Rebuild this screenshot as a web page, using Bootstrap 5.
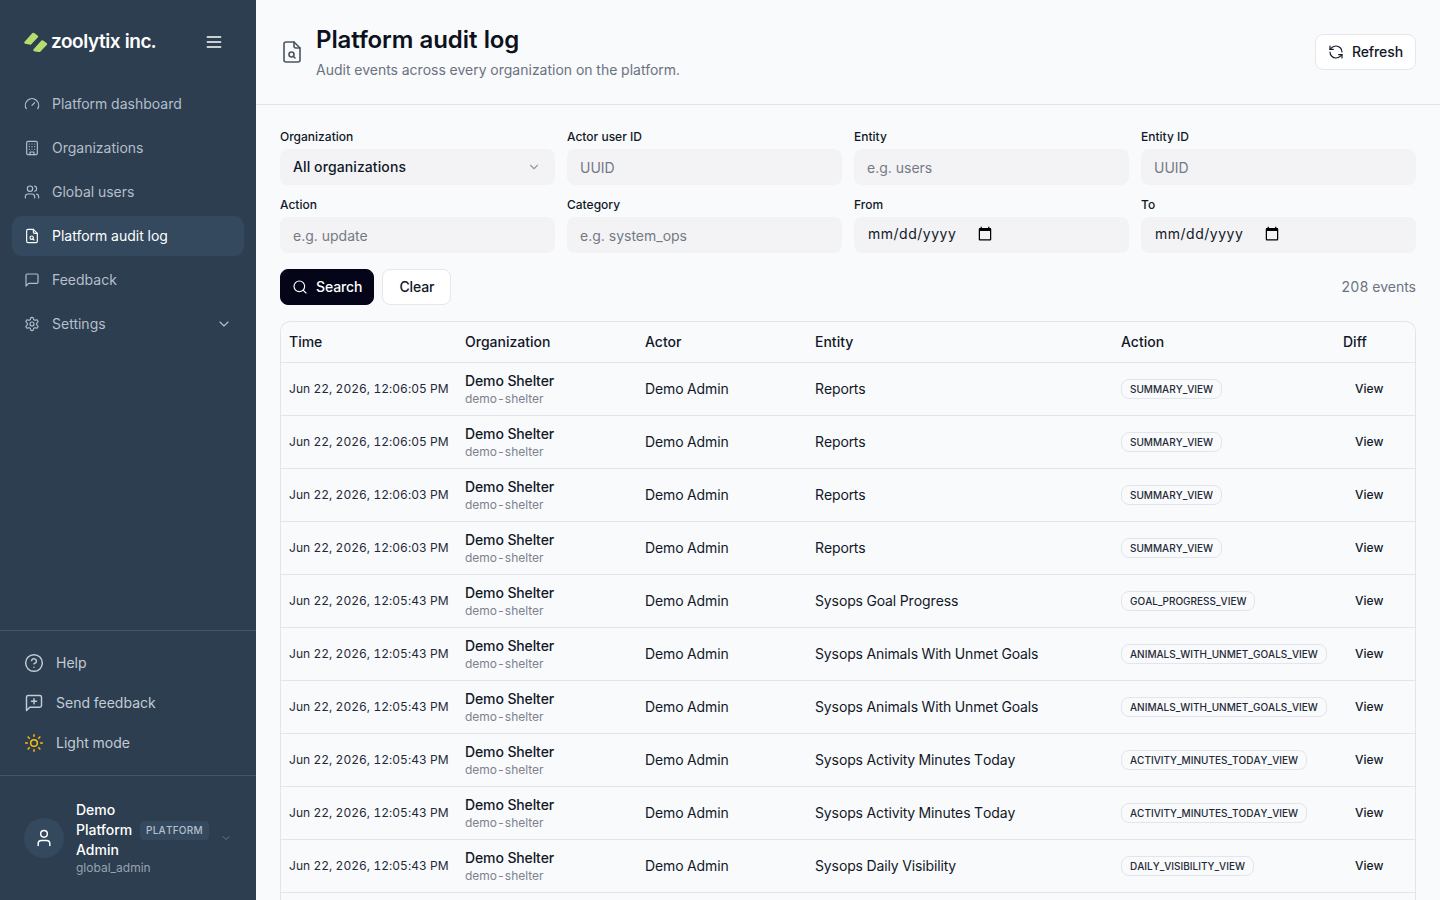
<!doctype html>
<html lang="en">
<head>
  <meta charset="utf-8">
  <meta name="viewport" content="width=device-width, initial-scale=1">
  <title>Platform audit log</title>
  <link href="https://cdn.jsdelivr.net/npm/bootstrap@5.3.5/dist/css/bootstrap.min.css" rel="stylesheet">
  <style>
    html, body { height: 100%; overflow: hidden; }
    body { font-family: Inter, "Liberation Sans", sans-serif; font-size: 14px; background: #f9fafc; color: #111827; font-variant-numeric: tabular-nums; }
    .ico { width: 16px; height: 16px; fill: none; stroke: currentColor; stroke-width: 1.75; stroke-linecap: round; stroke-linejoin: round; flex: none; }
    .ico-lg { width: 20px; height: 20px; }
    .ico-head { width: 24px; height: 24px; stroke-width: 1.6; color: #4b5563; margin-right: 12px; }
    .ico-sm { width: 12px; height: 12px; color: #6f7f90; }

    .side { width: 256px; height: 100vh; background: #2d3e50; color: #b4bfcb; flex: none; }
    .side-brand { height: 84px; padding: 0 24px; }
    .brand-name { font-size: 19px; font-weight: 600; color: #fff; letter-spacing: -.45px; margin-left: 3px; }
    .brand-burger { color: #fff; width: 20px; height: 20px; margin-right: 8px; }
    .side-nav { padding: 0 12px; gap: 4px; }
    .side-link { height: 40px; padding: 0 12px 2px; gap: 12px; border-radius: 10px; color: #b4bfcb; text-decoration: none; }
    .side-link .ico { margin-top: 2px; }
    .side-link.is-on { background: #34495e; color: #fff; }
    .side-foot { border-top: 1px solid #45546a; padding: 12px 12px 12px 24px; }
    .foot-link { height: 40px; gap: 12px; padding-bottom: 2px; color: #c3ccd6; text-decoration: none; }
    .foot-link .ico { margin-top: 2px; }
    .side-user { border-top: 1px solid #45546a; height: 125px; padding: 0 24px; gap: 12px; }
    .user-pic { width: 40px; height: 40px; border-radius: 50%; background: #34495e; color: #fff; flex: none; }
    .user-name { color: #fff; font-weight: 500; line-height: 20px; width: 132px; white-space: nowrap; }
    .user-tag { display: inline-block; font-size: 10px; line-height: 19px; padding: 0 6px; margin: 1px 0 0 4px; border-radius: 4px; background: #34495e; color: #b4bfcb; letter-spacing: .25px; font-weight: 500; vertical-align: top; font-kerning: none; }
    .user-role { font-size: 12px; color: #95a3b2; line-height: 16px; }

    .page-head { height: 105px; padding: 0 24px; border-bottom: 1px solid #e3e5ea; }
    .page-title { font-size: 24px; font-weight: 600; line-height: 32px; margin: 0; color: #0c111d; letter-spacing: -.1px; }
    .page-sub { color: #6b7280; line-height: 20px; margin-top: 4px; }
    .btn-plain { background: #fff; border: 1px solid #e5e7eb; border-radius: 8px; height: 36px; padding: 0 12px 2px; font-size: 14px; font-weight: 500; color: #111827; gap: 8px; letter-spacing: -.1px; }
    .btn-plain .ico { margin-top: 2px; }
    .btn-dark-ink { background: #05051a; border: 1px solid #05051a; color: #fff; padding-left: 11px; padding-right: 11px; }
    .btn-dark-ink:hover { background: #05051a; color: #fff; }

    .filter-box { padding: 24px 24px 0; }
    .filter-grid { display: grid; grid-template-columns: repeat(4, 1fr); gap: 12px; }
    .filter-grid .form-label { font-size: 12px; font-weight: 500; line-height: 16px; margin-bottom: 4px; display: block; color: #111827; }
    .filter-grid .form-control, .filter-grid .form-select { height: 36px; background-color: #f3f3f5; background-clip: border-box; border: 1px solid transparent; border-radius: 8px; font-size: 14px; padding: 4px 12px; color: #111827; box-shadow: none; }
    .filter-grid .form-control::placeholder { color: #737a86; opacity: 1; }
    .filter-grid .form-select { font-weight: 500; letter-spacing: .1px; padding-top: 2px; padding-bottom: 4px; background-image: url("data:image/svg+xml,%3csvg xmlns='http://www.w3.org/2000/svg' viewBox='0 0 24 24' fill='none' stroke='%23999' stroke-width='2' stroke-linecap='round' stroke-linejoin='round'%3e%3cpath d='m6 9 6 6 6-6'/%3e%3c/svg%3e"); background-size: 14px; background-position: right 13px center; }
    .filter-grid input[type=date] { display: flex; font-size: 14px; padding-top: 2px; padding-bottom: 5px; }
    input[type=date]::-webkit-datetime-edit { flex: none; margin-left: 1px; letter-spacing: .5px; }
    input[type=date]::-webkit-calendar-picker-indicator { margin-left: -5px; margin-right: auto; padding: 0; width: 16px; height: 16px; }
    .action-row { margin-top: 16px; gap: 8px; }
    .event-count { color: #6b7280; margin-left: auto; padding-bottom: 2px; }

    .log-main { height: 100vh; }
    .log-wrap { margin: 16px 24px 0; border: 1px solid #e3e5ea; border-bottom: 0; border-radius: 10px 10px 0 0; overflow: hidden; }
    .log-table { table-layout: fixed; width: 100%; margin: 0; --bs-table-bg: transparent; --bs-table-color: #111827; --bs-table-border-color: #e3e5ea; }
    .log-table th { height: 40px; padding: 0 8px; font-weight: 500; font-size: 14px; vertical-align: middle; }
    .log-table td { height: 53px; padding: 0 8px; vertical-align: middle; letter-spacing: -.12px; font-kerning: none; }
    .log-table td.cell-time { font-size: 12px; letter-spacing: .04px; white-space: nowrap; color: #1f2937; font-kerning: auto; }
    .org-name { font-weight: 500; line-height: 18px; margin-top: 2px; }
    .org-slug { font-size: 12px; color: #7c828d; line-height: 16px; margin-top: 1px; letter-spacing: 0; }
    .act-pill { display: inline-block; border: 1px solid #e3e5ea; border-radius: 8px; font-size: 10px; font-weight: 500; line-height: 18px; padding: 0 8px; margin-bottom: 2px; white-space: nowrap; color: #1f2937; letter-spacing: 0; }
    .view-link { display: inline-block; font-size: 12px; font-weight: 500; color: #111827; text-decoration: none; margin: 0 0 2px 12px; letter-spacing: 0; }
  </style>
</head>

<body>
  <svg width="0" height="0" class="position-absolute">
    <symbol id="i-gauge" viewBox="0 0 24 24"><path d="m12 14 4-4"/><path d="M3.34 19a10 10 0 1 1 17.32 0"/></symbol>
    <symbol id="i-building" viewBox="0 0 24 24"><rect width="16" height="20" x="4" y="2" rx="2"/><path d="M9 22v-4h6v4"/><path d="M8 6h.01M16 6h.01M12 6h.01M12 10h.01M12 14h.01M16 10h.01M16 14h.01M8 10h.01M8 14h.01"/></symbol>
    <symbol id="i-users" viewBox="0 0 24 24"><path d="M16 21v-2a4 4 0 0 0-4-4H6a4 4 0 0 0-4 4v2"/><circle cx="9" cy="7" r="4"/><path d="M22 21v-2a4 4 0 0 0-3-3.87"/><path d="M16 3.13a4 4 0 0 1 0 7.75"/></symbol>
    <symbol id="i-file" viewBox="0 0 24 24"><path d="M14 2H6a2 2 0 0 0-2 2v16a2 2 0 0 0 2 2h12a2 2 0 0 0 2-2V8z"/><path d="M14 2v4a2 2 0 0 0 2 2h4"/><circle cx="11.500" cy="14.500" r="2.500"/><path d="m13.300 16.300 1.700 1.700"/></symbol>
    <symbol id="i-msg" viewBox="0 0 24 24"><path d="M21 15a2 2 0 0 1-2 2H7l-4 4V5a2 2 0 0 1 2-2h14a2 2 0 0 1 2 2z"/></symbol>
    <symbol id="i-gear" viewBox="0 0 24 24"><path d="M12.220 2h-.44a2 2 0 0 0-2 2v.18a2 2 0 0 1-1 1.730l-.43.25a2 2 0 0 1-2 0l-.15-.08a2 2 0 0 0-2.730.73l-.22.38a2 2 0 0 0 .73 2.730l.15.1a2 2 0 0 1 1 1.720v.51a2 2 0 0 1-1 1.740l-.15.09a2 2 0 0 0-.73 2.730l.22.38a2 2 0 0 0 2.730.73l.15-.08a2 2 0 0 1 2 0l.43.25a2 2 0 0 1 1 1.730V20a2 2 0 0 0 2 2h.44a2 2 0 0 0 2-2v-.18a2 2 0 0 1 1-1.730l.43-.25a2 2 0 0 1 2 0l.15.08a2 2 0 0 0 2.730-.73l.22-.39a2 2 0 0 0-.73-2.730l-.15-.08a2 2 0 0 1-1-1.740v-.5a2 2 0 0 1 1-1.740l.15-.09a2 2 0 0 0 .73-2.730l-.22-.38a2 2 0 0 0-2.730-.73l-.15.08a2 2 0 0 1-2 0l-.43-.25a2 2 0 0 1-1-1.730V4a2 2 0 0 0-2-2z"/><circle cx="12" cy="12" r="3"/></symbol>
    <symbol id="i-chev" viewBox="0 0 24 24"><path d="m6 9 6 6 6-6"/></symbol>
    <symbol id="i-help" viewBox="0 0 24 24"><circle cx="12" cy="12" r="10"/><path d="M9.090 9a3 3 0 0 1 5.830 1c0 2-3 3-3 3"/><path d="M12 17h.01"/></symbol>
    <symbol id="i-msgplus" viewBox="0 0 24 24"><path d="M21 15a2 2 0 0 1-2 2H7l-4 4V5a2 2 0 0 1 2-2h14a2 2 0 0 1 2 2z"/><path d="M12 7v6M9 10h6"/></symbol>
    <symbol id="i-sun" viewBox="0 0 24 24"><circle cx="12" cy="12" r="4"/><path d="M12 2v2M12 20v2M4.930 4.930l1.410 1.410M17.660 17.660l1.410 1.410M2 12h2M20 12h2M6.340 17.660l-1.410 1.410M19.070 4.930l-1.410 1.410"/></symbol>
    <symbol id="i-user" viewBox="0 0 24 24"><path d="M19 21v-2a4 4 0 0 0-4-4H9a4 4 0 0 0-4 4v2"/><circle cx="12" cy="7" r="4"/></symbol>
    <symbol id="i-refresh" viewBox="0 0 24 24"><path d="M21 12a9 9 0 0 0-9-9 9.750 9.750 0 0 0-6.740 2.740L3 8"/><path d="M3 3v5h5"/><path d="M3 12a9 9 0 0 0 9 9 9.750 9.750 0 0 0 6.740-2.740L21 16"/><path d="M16 16h5v5"/></symbol>
    <symbol id="i-search" viewBox="0 0 24 24"><circle cx="11" cy="11" r="8"/><path d="m21 21-4.300-4.300"/></symbol>
    <symbol id="i-menu" viewBox="0 0 24 24"><path d="M4 6h16M4 12h16M4 18h16"/></symbol>
  </svg>

  <div class="d-flex">
    <!-- Sidebar -->
    <aside class="side d-flex flex-column">
      <div class="side-brand d-flex align-items-center">
        <svg width="24" height="20" viewBox="0 0 24 20"><path id="logo-bar" d="M.8 9.600 8.200 1.300a1.500 1.500 0 0 1 2-.2l3.300 2.300a1.500 1.500 0 0 1 .2 2.200l-6.400 6.700a1.500 1.500 0 0 1-2 .2L1 11.800a1.500 1.500 0 0 1-.2-2.200z" fill="#b5de6f"/><use href="#logo-bar" x="9" y="7.500"/></svg>
        <span class="brand-name">zoolytix inc.</span>
        <svg class="ico brand-burger ms-auto"><use href="#i-menu"/></svg>
      </div>
      <nav class="side-nav d-flex flex-column">
        <a class="side-link d-flex align-items-center" href="#"><svg class="ico"><use href="#i-gauge"/></svg>Platform dashboard</a>
        <a class="side-link d-flex align-items-center" href="#"><svg class="ico"><use href="#i-building"/></svg>Organizations</a>
        <a class="side-link d-flex align-items-center" href="#"><svg class="ico"><use href="#i-users"/></svg>Global users</a>
        <a class="side-link is-on d-flex align-items-center" href="#"><svg class="ico"><use href="#i-file"/></svg>Platform audit log</a>
        <a class="side-link d-flex align-items-center" href="#"><svg class="ico"><use href="#i-msg"/></svg>Feedback</a>
        <a class="side-link d-flex align-items-center" href="#"><svg class="ico"><use href="#i-gear"/></svg>Settings<svg class="ico ms-auto"><use href="#i-chev"/></svg></a>
      </nav>
      <div class="side-foot mt-auto d-flex flex-column">
        <a class="foot-link d-flex align-items-center" href="#"><svg class="ico ico-lg"><use href="#i-help"/></svg>Help</a>
        <a class="foot-link d-flex align-items-center" href="#"><svg class="ico ico-lg"><use href="#i-msgplus"/></svg>Send feedback</a>
        <a class="foot-link d-flex align-items-center" href="#"><svg class="ico ico-lg text-warning"><use href="#i-sun"/></svg>Light mode</a>
      </div>
      <div class="side-user d-flex align-items-center">
        <div class="user-pic d-flex align-items-center justify-content-center"><svg class="ico ico-lg"><use href="#i-user"/></svg></div>
        <div>
          <div class="user-name">Demo<br>Platform <span class="user-tag">PLATFORM</span><br>Admin</div>
          <div class="user-role">global_admin</div>
        </div>
        <svg class="ico ico-sm ms-auto"><use href="#i-chev"/></svg>
      </div>
    </aside>

    <!-- Main -->
    <main class="log-main flex-grow-1 overflow-hidden d-flex flex-column">
      <header class="page-head d-flex align-items-center">
        <svg class="ico ico-head"><use href="#i-file"/></svg>
        <div>
          <h1 class="page-title">Platform audit log</h1>
          <div class="page-sub">Audit events across every organization on the platform.</div>
        </div>
        <button class="btn btn-plain d-flex align-items-center ms-auto"><svg class="ico"><use href="#i-refresh"/></svg>Refresh</button>
      </header>

      <section class="filter-box">
        <div class="filter-grid">
          <div><label class="form-label">Organization</label><select class="form-select"><option>All organizations</option></select></div>
          <div><label class="form-label">Actor user ID</label><input class="form-control" placeholder="UUID"></div>
          <div><label class="form-label">Entity</label><input class="form-control" placeholder="e.g. users"></div>
          <div><label class="form-label">Entity ID</label><input class="form-control" placeholder="UUID"></div>
          <div><label class="form-label">Action</label><input class="form-control" placeholder="e.g. update"></div>
          <div><label class="form-label">Category</label><input class="form-control" placeholder="e.g. system_ops"></div>
          <div><label class="form-label">From</label><input type="date" class="form-control"></div>
          <div><label class="form-label">To</label><input type="date" class="form-control"></div>
        </div>
        <div class="action-row d-flex align-items-center">
          <button class="btn btn-plain btn-dark-ink d-flex align-items-center"><svg class="ico"><use href="#i-search"/></svg>Search</button>
          <button class="btn btn-plain px-3">Clear</button>
          <span class="event-count">208 events</span>
        </div>
      </section>

      <div class="log-wrap flex-grow-1">
        <table class="table log-table">
          <colgroup><col width="176"><col width="180"><col width="170"><col width="306"><col width="222"><col width="80"></colgroup>
          <thead><tr><th>Time</th><th>Organization</th><th>Actor</th><th>Entity</th><th>Action</th><th>Diff</th></tr></thead>
          <tbody>
            <tr><td class="cell-time">Jun 22, 2026, 12:06:05 PM</td><td><div class="org-name">Demo Shelter</div><div class="org-slug">demo-shelter</div></td><td>Demo Admin</td><td>Reports</td><td><span class="act-pill">SUMMARY_VIEW</span></td><td><a class="view-link" href="#">View</a></td></tr>
            <tr><td class="cell-time">Jun 22, 2026, 12:06:05 PM</td><td><div class="org-name">Demo Shelter</div><div class="org-slug">demo-shelter</div></td><td>Demo Admin</td><td>Reports</td><td><span class="act-pill">SUMMARY_VIEW</span></td><td><a class="view-link" href="#">View</a></td></tr>
            <tr><td class="cell-time">Jun 22, 2026, 12:06:03 PM</td><td><div class="org-name">Demo Shelter</div><div class="org-slug">demo-shelter</div></td><td>Demo Admin</td><td>Reports</td><td><span class="act-pill">SUMMARY_VIEW</span></td><td><a class="view-link" href="#">View</a></td></tr>
            <tr><td class="cell-time">Jun 22, 2026, 12:06:03 PM</td><td><div class="org-name">Demo Shelter</div><div class="org-slug">demo-shelter</div></td><td>Demo Admin</td><td>Reports</td><td><span class="act-pill">SUMMARY_VIEW</span></td><td><a class="view-link" href="#">View</a></td></tr>
            <tr><td class="cell-time">Jun 22, 2026, 12:05:43 PM</td><td><div class="org-name">Demo Shelter</div><div class="org-slug">demo-shelter</div></td><td>Demo Admin</td><td>Sysops Goal Progress</td><td><span class="act-pill">GOAL_PROGRESS_VIEW</span></td><td><a class="view-link" href="#">View</a></td></tr>
            <tr><td class="cell-time">Jun 22, 2026, 12:05:43 PM</td><td><div class="org-name">Demo Shelter</div><div class="org-slug">demo-shelter</div></td><td>Demo Admin</td><td>Sysops Animals With Unmet Goals</td><td><span class="act-pill">ANIMALS_WITH_UNMET_GOALS_VIEW</span></td><td><a class="view-link" href="#">View</a></td></tr>
            <tr><td class="cell-time">Jun 22, 2026, 12:05:43 PM</td><td><div class="org-name">Demo Shelter</div><div class="org-slug">demo-shelter</div></td><td>Demo Admin</td><td>Sysops Animals With Unmet Goals</td><td><span class="act-pill">ANIMALS_WITH_UNMET_GOALS_VIEW</span></td><td><a class="view-link" href="#">View</a></td></tr>
            <tr><td class="cell-time">Jun 22, 2026, 12:05:43 PM</td><td><div class="org-name">Demo Shelter</div><div class="org-slug">demo-shelter</div></td><td>Demo Admin</td><td>Sysops Activity Minutes Today</td><td><span class="act-pill">ACTIVITY_MINUTES_TODAY_VIEW</span></td><td><a class="view-link" href="#">View</a></td></tr>
            <tr><td class="cell-time">Jun 22, 2026, 12:05:43 PM</td><td><div class="org-name">Demo Shelter</div><div class="org-slug">demo-shelter</div></td><td>Demo Admin</td><td>Sysops Activity Minutes Today</td><td><span class="act-pill">ACTIVITY_MINUTES_TODAY_VIEW</span></td><td><a class="view-link" href="#">View</a></td></tr>
            <tr><td class="cell-time">Jun 22, 2026, 12:05:43 PM</td><td><div class="org-name">Demo Shelter</div><div class="org-slug">demo-shelter</div></td><td>Demo Admin</td><td>Sysops Daily Visibility</td><td><span class="act-pill">DAILY_VISIBILITY_VIEW</span></td><td><a class="view-link" href="#">View</a></td></tr>
          </tbody>
        </table>
      </div>
    </main>
  </div>

  <script src="https://cdn.jsdelivr.net/npm/bootstrap@5.3.5/dist/js/bootstrap.bundle.min.js"></script>
</body>
</html>
